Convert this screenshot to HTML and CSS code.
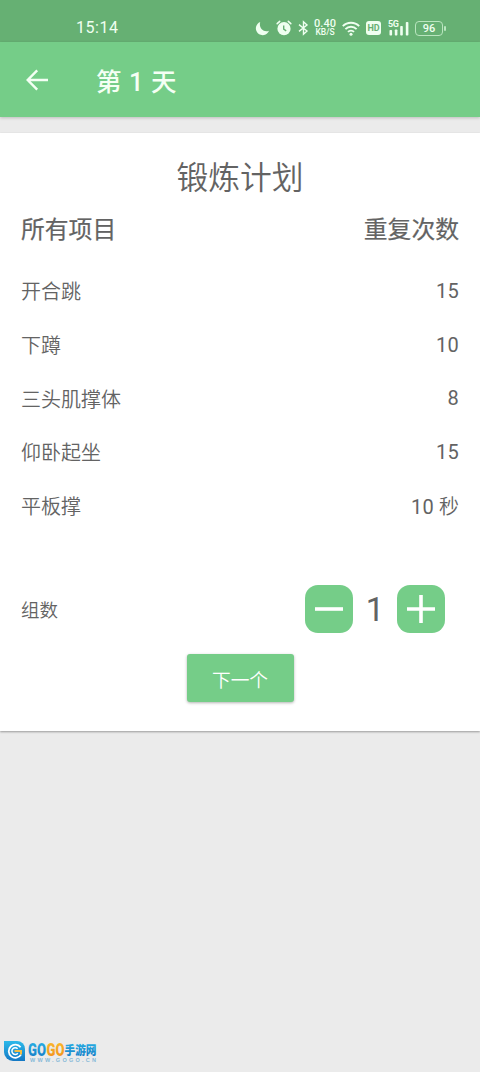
FILE: index.html
```html
<!DOCTYPE html>
<html lang="zh-CN">
<head>
<meta charset="utf-8">
<title>第 1 天</title>
<link rel="stylesheet" href="styles.css">
</head>
<body>
<div class="status">
  <span class="clock">15:14</span>
  <div class="status-icons">
    <svg class="moon" width="15" height="15" viewBox="0 0 15 15"><path d="M5.2 1A6.8 6.8 0 1 0 14 9.8C8.5 12 3.5 7 5.2 1Z" fill="currentColor"/></svg>
    <svg class="alarm" width="16" height="16" viewBox="0 0 16 16" fill="none" stroke="currentColor"><circle cx="8" cy="8.7" r="6.6" fill="currentColor" stroke="none"/><path d="M1.2 3.6 3.7 1.4M14.8 3.6 12.3 1.4" stroke-width="1.6" stroke-linecap="round"/><path class="cut" d="M7.7 5.5v3.7l2.5 1.7" stroke-width="1.4"/></svg>
    <svg class="bluetooth" width="11" height="16" viewBox="0 0 11 16" fill="none" stroke="currentColor" stroke-width="1.4"><path d="M1 4.6 9 11 5.5 14.2V1.8L9 5 1 11.4"/></svg>
    <div class="speed"><span>0.40</span><span class="unit">KB/S</span></div>
    <svg class="wifi" width="18" height="15" viewBox="0 0 18 15" fill="none" stroke="currentColor" stroke-width="1.9"><path d="M.8 5.2a11.6 11.6 0 0 1 16.4 0M3.4 8.1a7.9 7.9 0 0 1 11.2 0M6 10.9a4.2 4.2 0 0 1 6 0"/><circle cx="9" cy="13.2" r="1.5" fill="currentColor" stroke="none"/></svg>
    <span class="hd">HD</span>
    <div class="signal">
      <span class="net">5G</span>
      <svg width="21" height="15" viewBox="0 0 21 15" fill="currentColor"><rect x="1.5" y="9" width="2.6" height="5.5" rx=".8"/><rect x="6.8" y="8.5" width="2.6" height="6" rx=".8"/><rect x="12.2" y="5" width="2.6" height="9.5" rx=".8"/><rect x="17.8" y="1" width="2.6" height="13.5" rx=".8"/></svg>
    </div>
    <div class="battery">96</div>
  </div>
</div>
<header class="appbar">
  <svg class="back" width="24" height="24" viewBox="0 0 24 24" fill="none" stroke="currentColor" stroke-width="2.4"><path d="M23 12H3M12.2 2.3 2.7 12l9.5 9.7"/></svg>
  <h1>第 1 天</h1>
</header>
<main class="card">
  <h2>锻炼计划</h2>
  <div class="heads"><span>所有项目</span><span>重复次数</span></div>
  <div class="rows">
    <div class="row"><span>开合跳</span><span>15</span></div>
    <div class="row"><span>下蹲</span><span>10</span></div>
    <div class="row"><span>三头肌撑体</span><span>8</span></div>
    <div class="row"><span>仰卧起坐</span><span>15</span></div>
    <div class="row"><span>平板撑</span><span>10 <i>秒</i></span></div>
  </div>
  <div class="sets">
    <span class="sets-label">组数</span>
    <button class="step"><svg width="48" height="48" viewBox="0 0 48 48" stroke="#fff" stroke-width="3.6"><path d="M10 24h28"/></svg></button>
    <span class="count">1</span>
    <button class="step"><svg width="48" height="48" viewBox="0 0 48 48" stroke="#fff" stroke-width="3.6"><path d="M10 24h28M24 10v28"/></svg></button>
  </div>
  <button class="next">下一个</button>
</main>
<footer class="mark">
  <svg width="94" height="24" viewBox="0 0 94 24">
    <defs>
      <linearGradient id="sky" x2="0" y2="1"><stop stop-color="#2cb9ea"/><stop offset="1" stop-color="#1478c4"/></linearGradient>
      <linearGradient id="sun" x2="0" y2="1"><stop stop-color="#fbc02e"/><stop offset="1" stop-color="#f18d1c"/></linearGradient>
    </defs>
    <path d="M0 1H13A8 8 0 0 1 21 9V21H9A9 9 0 0 1 0 12Z" fill="url(#sky)"/>
    <path d="M16.6 7.2A6.6 6.6 0 1 0 17 14.6" fill="none" stroke="#fff" stroke-width="1.8"/>
    <path d="M13.6 8.8A3.3 3.3 0 1 0 13.8 13.2" fill="none" stroke="#fff" stroke-width="1.5"/>
    <path d="M10.5 11H17v3.5" fill="none" stroke="#f4bd43" stroke-width="2"/>
    <text class="go" x="24" y="15.5" textLength="18" lengthAdjust="spacingAndGlyphs" fill="url(#sky)">GO</text>
    <text class="go" x="42.5" y="15.5" textLength="18" lengthAdjust="spacingAndGlyphs" fill="url(#sun)">GO</text>
    <text class="cn" x="60.5" y="14.5" textLength="32" lengthAdjust="spacingAndGlyphs" fill="url(#sky)">手游网</text>
    <text class="url" x="26" y="22" textLength="66">WWW.GOGO.CN</text>
  </svg>
</footer>
</body>
</html>
```
FILE: styles.css
```css
* { box-sizing: border-box; }
body {
  margin: 0;
  width: 480px;
  height: 1072px;
  display: flex;
  flex-direction: column;
  background: #ebebeb;
  color: #636363;
  font-family: Roboto, "Noto Sans CJK SC", sans-serif;
  overflow: hidden;
}
h1, h2 { margin: 0; font-weight: 400; }
svg { display: block; flex: none; }
button { border: 0; padding: 0; font: inherit; color: #fff; background: #75cd88; }

.status {
  height: 42px;
  flex: none;
  display: flex;
  justify-content: space-between;
  padding: 13px 37px 0 76px;
  background: #66b073;
  color: #effff0;
}
.clock { font-size: 16px; line-height: 30px; letter-spacing: .55px; }
.status-icons { display: flex; align-items: center; height: 30px; }
.alarm { margin-left: 6px; }
.cut { stroke: #66b073; }
.bluetooth { margin-left: 6px; }
.speed {
  width: 24px;
  margin-left: 4px;
  display: flex;
  flex-direction: column;
  align-items: center;
  font-size: 11px;
  line-height: 9px;
  font-weight: 500;
}
.speed span { height: 9px; }
.speed .unit { font-size: 8.5px; line-height: 9px; }
.wifi { margin-left: 5px; }
.hd {
  width: 15px;
  height: 14px;
  margin-left: 6px;
  border-radius: 3px;
  background: #effff0;
  color: #66b073;
  font: 700 9px/14px Roboto, sans-serif;
  text-align: center;
}
.signal { position: relative; margin-left: 7px; }
.net { position: absolute; left: 0; top: -1px; font: 700 9px/9px Roboto, sans-serif; letter-spacing: -.5px; }
.battery {
  position: relative;
  width: 28px;
  height: 15px;
  margin-left: 6px;
  border: 1.5px solid #b9e5bf;
  border-radius: 4px;
  font-size: 11px;
  line-height: 13px;
  font-weight: 500;
  text-align: center;
}
.battery::after {
  content: "";
  position: absolute;
  right: -4px;
  top: 4px;
  width: 2px;
  height: 5px;
  border-radius: 1px;
  background: #b9e5bf;
}

.appbar {
  height: 75px;
  flex: none;
  display: flex;
  align-items: center;
  padding: 1px 0 0 25px;
  background: #75cd88;
  color: #f4fff4;
  box-shadow: 0 1px 3px rgba(0, 0, 0, .2);
}
.appbar h1 { margin-left: 47px; padding-bottom: 2px; font-size: 25.5px; font-weight: 500; letter-spacing: .6px; }

.card {
  height: 598px;
  flex: none;
  margin-top: 16px;
  padding: 21px 21px 0;
  display: flex;
  flex-direction: column;
  background: #fff;
  box-shadow: 0 1px 2px rgba(0, 0, 0, .35);
}
.card h2 { font-size: 31.8px; line-height: 48px; text-align: center; font-weight: 350; }
.heads {
  display: flex;
  justify-content: space-between;
  margin-top: 8px;
  font-size: 23.8px;
  line-height: 40px;
  font-weight: 400;
  -webkit-text-stroke: .2px;
}
.rows { margin-top: 14px; }
.row {
  height: 53.7px;
  display: flex;
  align-items: center;
  justify-content: space-between;
  font-size: 20px;
  font-weight: 350;
}
.row span + span { font-weight: 400; letter-spacing: .2px; }
.row i { font-style: normal; font-weight: 350; letter-spacing: 0; }
.sets { display: flex; align-items: center; height: 48px; margin-top: 53px; padding-right: 14px; }
.sets-label { flex: 1; font-size: 18.5px; font-weight: 350; }
.step { width: 48px; height: 48px; border-radius: 13px; }
.count { width: 44px; padding-top: 2px; font-size: 33px; line-height: 48px; text-align: center; }
.next {
  align-self: center;
  width: 107px;
  height: 48px;
  margin-top: 21px;
  border-radius: 3px;
  font-size: 18.7px;
  font-weight: 350;
  box-shadow: 0 1px 3px rgba(0, 0, 0, .3);
}

.mark { margin-top: 309px; padding-left: 4px; }
.go { font: 900 18px Roboto, sans-serif; }
.cn { font: 900 12.5px "Noto Sans CJK SC", sans-serif; }
.url { font: 700 5.5px "Liberation Sans", sans-serif; fill: #86b9d8; }
```
